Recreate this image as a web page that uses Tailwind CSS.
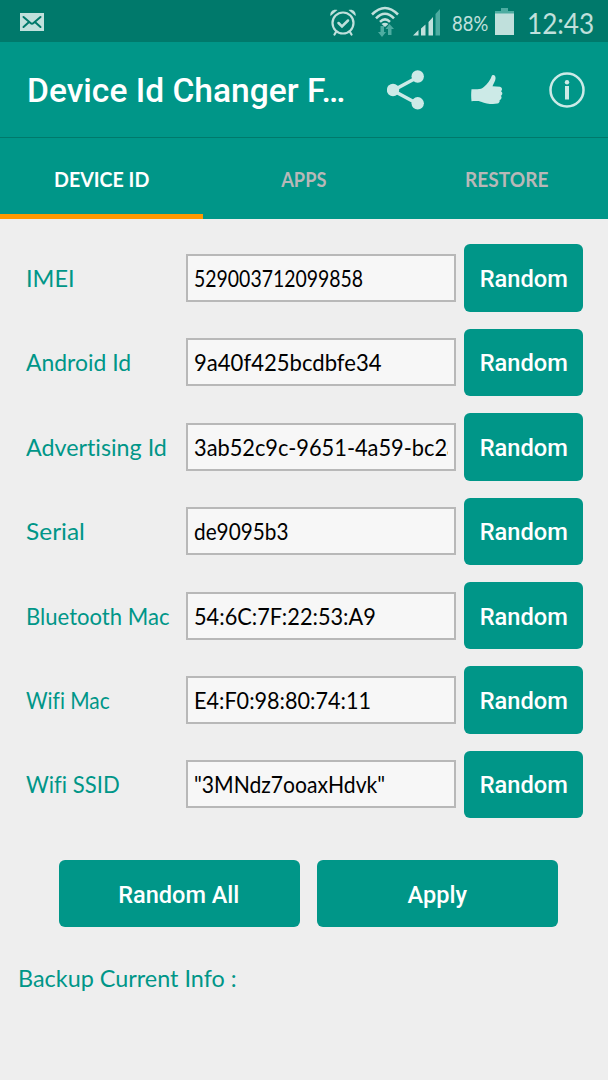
<!DOCTYPE html>
<html lang="en">

<head>
    <meta charset="UTF-8">
    <title>Device Id Changer</title>
    <script src="https://cdn.jsdelivr.net/npm/@tailwindcss/browser@4"></script>
</head>

<body class="w-[608px] h-[1080px] overflow-hidden bg-[#eeeeee] font-['Lato',sans-serif] [font-variant-ligatures:none] text-black">
    <!-- status bar -->
    <div class="h-[42px] bg-[#00796b] flex items-center text-[#c0e0dc]">
        <svg class="ml-5 mt-[1px]" width="24" height="18" viewBox="0 0 24 18">
            <path fill="currentColor" d="M0 0h24v18H0z" />
            <path fill="none" stroke="#00796b" stroke-width="2" stroke-linecap="round" stroke-linejoin="round" d="M3.500 4l7 6q1.500 1.200 3 0l7-6M3.500 14l5-4.500M20.500 14l-5-4.500" />
        </svg>
        <svg class="ml-[286px] mt-[1px]" width="26" height="28" viewBox="0 0 26 28" fill="none" stroke="currentColor" stroke-width="2.200" stroke-linecap="round">
            <circle cx="13" cy="15" r="10.500" />
            <path d="M8.500 15l3.500 3.500 6-6" stroke-width="2.500" />
            <path d="M6 24l-1.500 2.500M20 24l1.500 2.500" />
            <path fill="currentColor" stroke="none" d="M0.500 8C-0.500 4 3 0.500 7.500 2zM25.500 8C26.500 4 23 0.500 18.500 2z" />
        </svg>
        <svg class="ml-[15px]" width="28" height="31" viewBox="0 0 28 31" fill="none" stroke="currentColor" stroke-width="2.500">
            <path d="M1 8.500Q14-4.500 27 8.500M5 12.300Q14 3 23 12.300M9 15.800Q14 11 19 15.800" />
            <path fill="currentColor" stroke="none" d="M10.500 18Q14 15.500 17.500 18L14 21z" />
            <path fill="#4daca1" stroke="none" d="M9.500 20h3.500v6H15l-4 5L7 26h2.500zM17 29v-6H14.500l4-5 4.500 5h-2.500v6z" />
        </svg>
        <svg class="ml-[14px] mt-[2px]" width="27" height="28" viewBox="0 0 27 28" fill="currentColor">
            <path d="M0 27.500l5.500-5.500v5.500zM8 20.500l4.500-4v11H8zM15.500 14l4.500-5v18.500h-4.500z" />
            <path fill="#4daca1" d="M22.500 6L27 1v26.500h-4.500z" />
        </svg>
        <div class="ml-3 mt-[3px] w-[37px] text-[21px]"><span class="inline-block origin-left scale-x-[0.880]">88%</span></div>
        <svg class="ml-[6px]" width="19" height="28" viewBox="0 0 19 28">
            <path fill="#4daca1" d="M6 1h7v3h6v5H0V4h6z" />
            <path fill="currentColor" d="M0 6.500h19V28H0z" />
        </svg>
        <div class="ml-[13px] mt-[3px] text-[29px] whitespace-nowrap"><span class="inline-block origin-left scale-x-[0.900]">12:43</span></div>
    </div>

    <!-- title bar -->
    <div class="h-[96px] bg-[#009688] border-b border-[#00796b] flex items-center">
        <h1 class="ml-[27px] mt-[2px] w-[330px] font-['Roboto',sans-serif] font-medium text-[34px] text-white whitespace-nowrap"><span class="inline-block origin-left scale-x-[0.987]">Device Id Changer F…</span></h1>
        <svg class="ml-[30px]" width="38" height="40" viewBox="0 0 38 40" fill="#cceae7">
            <path fill="none" stroke="#cceae7" stroke-width="3.500" d="M31 7L6 20.500 31 34" />
            <circle cx="30.700" cy="6.500" r="6.200" />
            <circle cx="6" cy="20" r="6.200" />
            <circle cx="30.700" cy="33.300" r="6.200" />
        </svg>
        <svg class="ml-[46px]" width="32" height="31" viewBox="0 0 32 31" fill="#cceae7">
            <path d="M0.500 15.200C5 15.200 9 15.500 11.500 14C15 11.500 19 7 20.500 2.500C21.300 0.500 24 0.500 24.500 3.500C25 6.500 22.500 9.500 21.500 12.300L29 12.800C31.500 13.500 31.500 16.300 30 17.200C32 18.500 31.500 21 29.800 21.700C31.200 23 30.500 25.300 28.600 26C29 28 28 29.300 26.500 29.600C21 30.800 15 29.500 10 27.700C7 26.800 3.500 27.200 0.500 27.200Q-0.200 21 0.500 15.200z" />
        </svg>
        <svg class="ml-[45px]" width="38" height="38" viewBox="0 0 38 38" fill="#cceae7">
            <circle cx="19" cy="19" r="16.500" fill="none" stroke="#cceae7" stroke-width="2.500" />
            <circle cx="19" cy="11.300" r="2.200" />
            <path d="M17 15h4v13.500h-4z" />
        </svg>
    </div>

    <!-- tabs -->
    <div class="h-[81px] bg-[#009688] grid grid-cols-3 text-center font-bold text-[20px] text-[#b8b8b8]">
        <div class="flex items-center justify-center border-b-[5px] border-[#ff9800] pt-[5px] text-white"><span class="inline-block scale-x-[0.980]">DEVICE ID</span></div>
        <div class="flex items-center justify-center"><span class="inline-block scale-x-[0.910]">APPS</span></div>
        <div class="flex items-center justify-center"><span class="inline-block scale-x-[0.955]">RESTORE</span></div>
    </div>

    <!-- id fields -->
    <div class="pt-[25.400px] pl-[26px] flex flex-col gap-[17px] text-2xl whitespace-nowrap">
        <div class="h-[67.400px] flex items-center">
            <label class="w-40 text-[#009688]"><span class="inline-block origin-left scale-x-[0.980]">IMEI</span></label>
            <div class="w-[270px] h-12 border-2 border-[#b8b8b8] bg-[#f7f7f7] px-[6px] flex items-center"><div class="w-full overflow-hidden"><span class="inline-block origin-left scale-x-[0.810]">529003712099858</span></div></div>
            <button class="ml-2 w-[119px] h-full rounded-md bg-[#009688] pt-[2px] font-['Roboto',sans-serif] font-medium text-white"><span class="inline-block scale-x-[0.985]">Random</span></button>
        </div>
        <div class="h-[67.400px] flex items-center">
            <label class="w-40 text-[#009688]"><span class="inline-block origin-left scale-x-[0.955]">Android Id</span></label>
            <div class="w-[270px] h-12 border-2 border-[#b8b8b8] bg-[#f7f7f7] px-[6px] flex items-center"><div class="w-full overflow-hidden"><span class="inline-block origin-left scale-x-[0.920]">9a40f425bcdbfe34</span></div></div>
            <button class="ml-2 w-[119px] h-full rounded-md bg-[#009688] pt-[2px] font-['Roboto',sans-serif] font-medium text-white"><span class="inline-block scale-x-[0.985]">Random</span></button>
        </div>
        <div class="h-[67.400px] flex items-center">
            <label class="w-40 text-[#009688]"><span class="inline-block origin-left scale-x-[0.970]">Advertising Id</span></label>
            <div class="w-[270px] h-12 border-2 border-[#b8b8b8] bg-[#f7f7f7] px-[6px] flex items-center"><div class="w-full overflow-hidden"><span class="inline-block origin-left scale-x-[0.908]">3ab52c9c-9651-4a59-bc2a</span></div></div>
            <button class="ml-2 w-[119px] h-full rounded-md bg-[#009688] pt-[2px] font-['Roboto',sans-serif] font-medium text-white"><span class="inline-block scale-x-[0.985]">Random</span></button>
        </div>
        <div class="h-[67.400px] flex items-center">
            <label class="w-40 text-[#009688]"><span class="inline-block origin-left scale-x-[1.020]">Serial</span></label>
            <div class="w-[270px] h-12 border-2 border-[#b8b8b8] bg-[#f7f7f7] px-[6px] flex items-center"><div class="w-full overflow-hidden"><span class="inline-block origin-left scale-x-[0.865]">de9095b3</span></div></div>
            <button class="ml-2 w-[119px] h-full rounded-md bg-[#009688] pt-[2px] font-['Roboto',sans-serif] font-medium text-white"><span class="inline-block scale-x-[0.985]">Random</span></button>
        </div>
        <div class="h-[67.400px] flex items-center">
            <label class="w-40 text-[#009688]"><span class="inline-block origin-left scale-x-[0.920]">Bluetooth Mac</span></label>
            <div class="w-[270px] h-12 border-2 border-[#b8b8b8] bg-[#f7f7f7] px-[6px] flex items-center"><div class="w-full overflow-hidden"><span class="inline-block origin-left scale-x-[0.905]">54:6C:7F:22:53:A9</span></div></div>
            <button class="ml-2 w-[119px] h-full rounded-md bg-[#009688] pt-[2px] font-['Roboto',sans-serif] font-medium text-white"><span class="inline-block scale-x-[0.985]">Random</span></button>
        </div>
        <div class="h-[67.400px] flex items-center">
            <label class="w-40 text-[#009688]"><span class="inline-block origin-left scale-x-[0.870]">Wifi Mac</span></label>
            <div class="w-[270px] h-12 border-2 border-[#b8b8b8] bg-[#f7f7f7] px-[6px] flex items-center"><div class="w-full overflow-hidden"><span class="inline-block origin-left scale-x-[0.900]">E4:F0:98:80:74:11</span></div></div>
            <button class="ml-2 w-[119px] h-full rounded-md bg-[#009688] pt-[2px] font-['Roboto',sans-serif] font-medium text-white"><span class="inline-block scale-x-[0.985]">Random</span></button>
        </div>
        <div class="h-[67.400px] flex items-center">
            <label class="w-40 text-[#009688]"><span class="inline-block origin-left scale-x-[0.920]">Wifi SSID</span></label>
            <div class="w-[270px] h-12 border-2 border-[#b8b8b8] bg-[#f7f7f7] px-[6px] flex items-center"><div class="w-full overflow-hidden"><span class="inline-block origin-left scale-x-[0.880]">"3MNdz7ooaxHdvk"</span></div></div>
            <button class="ml-2 w-[119px] h-full rounded-md bg-[#009688] pt-[2px] font-['Roboto',sans-serif] font-medium text-white"><span class="inline-block scale-x-[0.985]">Random</span></button>
        </div>
    </div>

    <div class="mt-[42px] pl-2 flex justify-center gap-[17px] font-['Roboto',sans-serif] font-medium text-2xl text-white">
        <button class="w-[241px] h-[67px] rounded-md bg-[#009688] pt-[2px]"><span class="inline-block scale-x-[0.980]">Random All</span></button>
        <button class="w-[241px] h-[67px] rounded-md bg-[#009688] pt-[2px]"><span class="inline-block scale-x-[0.980]">Apply</span></button>
    </div>

    <p class="mt-[35px] ml-[18px] text-2xl text-[#009688] whitespace-nowrap"><span class="inline-block origin-left scale-x-[0.975]">Backup Current Info :</span></p>
</body>

</html>
